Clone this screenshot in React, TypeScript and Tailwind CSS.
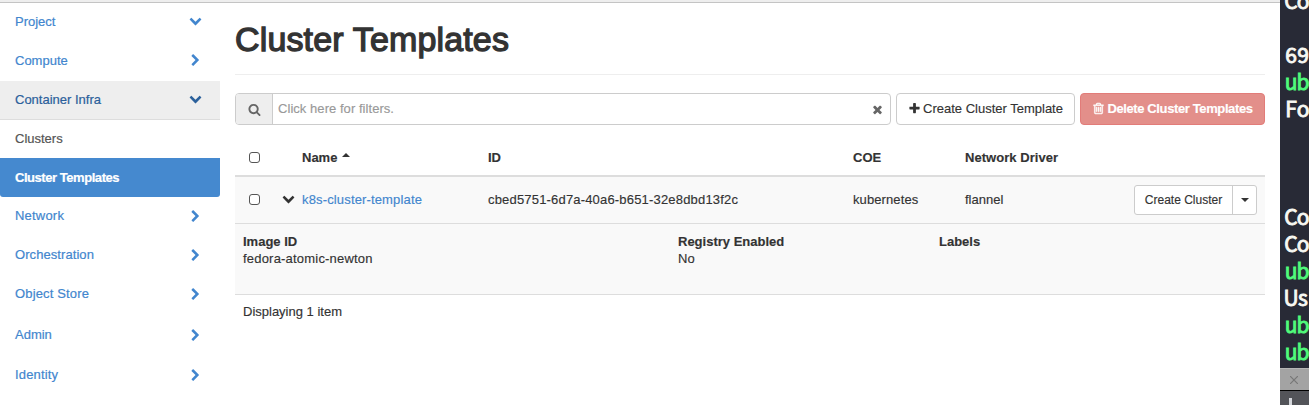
import React from "react";

const ICONS = {
  down: "M1683 808l-742 741q-19 19-45 19t-45-19l-742-741q-19-19-19-45.5t19-45.5l166-165q19-19 45-19t45 19l531 531 531-531q19-19 45-19t45 19l166 165q19 19 19 45.5t-19 45.5z",
  right: "M1363 877l-742 742q-19 19-45 19t-45-19l-166-166q-19-19-19-45t19-45l531-531-531-531q-19-19-19-45t19-45l166-166q19-19 45-19t45 19l742 742q19 19 19 45t-19 45z",
  search: "M1216 832q0-185-131.5-316.5t-316.5-131.5-316.5 131.5-131.5 316.5 131.5 316.5 316.5 131.5 316.5-131.5 131.5-316.5zm512 832q0 52-38 90t-90 38q-54 0-90-38l-343-342q-179 124-399 124-143 0-273.5-55.5t-225-150-150-225-55.5-273.5 55.5-273.5 150-225 225-150 273.5-55.5 273.5 55.5 225 150 150 225 55.5 273.5q0 220-124 399l343 343q37 37 37 90z",
  times: "M1490 1322q0 40-28 68l-136 136q-28 28-68 28t-68-28l-294-294-294 294q-28 28-68 28t-68-28l-136-136q-28-28-28-68t28-68l294-294-294-294q-28-28-28-68t28-68l136-136q28-28 68-28t68 28l294 294 294-294q28-28 68-28t68 28l136 136q28 28 28 68t-28 68l-294 294 294 294q28 28 28 68z",
  plus: "M1600 736v192q0 40-28 68t-68 28h-416v416q0 40-28 68t-68 28h-192q-40 0-68-28t-28-68v-416h-416q-40 0-68-28t-28-68v-192q0-40 28-68t68-28h416v-416q0-40 28-68t68-28h192q40 0 68 28t28 68v416h416q40 0 68 28t28 68z",
  trash: "M704 736v576q0 14-9 23t-23 9h-64q-14 0-23-9t-9-23v-576q0-14 9-23t23-9h64q14 0 23 9t9 23zm256 0v576q0 14-9 23t-23 9h-64q-14 0-23-9t-9-23v-576q0-14 9-23t23-9h64q14 0 23 9t9 23zm256 0v576q0 14-9 23t-23 9h-64q-14 0-23-9t-9-23v-576q0-14 9-23t23-9h64q14 0 23 9t9 23zm128 724v-948h-896v948q0 22 7 40.5t14.5 27 10.5 8.5h832q3 0 10.5-8.5t14.5-27 7-40.5zm-672-1076h448l-48-117q-7-9-17-11h-317q-10 2-17 11zm928 32v64q0 14-9 23t-23 9h-96v948q0 83-47 143.5t-113 60.5h-832q-66 0-113-58.5t-47-141.5v-952h-96q-14 0-23-9t-9-23v-64q0-14 9-23t23-9h309l70-167q15-37 54-63t79-26h320q40 0 79 26t54 63l70 167h309q14 0 23 9t9 23z",
};

function Icon({ name, className = "" }: { name: keyof typeof ICONS; className?: string }) {
  return (
    <svg viewBox="0 0 1792 1792" className={`size-[13px] shrink-0 ${className}`} fill="currentColor">
      <path d={ICONS[name]} />
    </svg>
  );
}

function NavItem({ label, open = false, className, iconClass = "mt-px" }: { label: string; open?: boolean; className: string; iconClass?: string }) {
  return (
    <a className={`flex items-center justify-between pr-[18px] pl-[15px] ${className}`}>
      <span>{label}</span>
      <Icon name={open ? "down" : "right"} className={iconClass} />
    </a>
  );
}

function Sidebar() {
  return (
    <nav className="flex w-[220px] shrink-0 flex-col text-[#4286ce] [-webkit-text-stroke:0.2px]">
      <NavItem label="Project" open className="h-[39px] pb-px" iconClass="mb-[3px]" />
      <NavItem label="Compute" className="h-[39px] pb-px" iconClass="mb-px" />
      <NavItem label="Container Infra" open className="h-[39px] border-b border-[#ddd] bg-[#eee] text-[#2b609b]" iconClass="mb-[3px]" />
      <a className="flex h-[38px] items-center pl-[15px] text-[#555]">Clusters</a>
      <a className="flex h-[39px] items-center rounded-b-[3px] bg-[#4589cf] pl-[15px] font-bold tracking-[-0.45px] text-white">Cluster Templates</a>
      <NavItem label="Network" className="h-[38px] tracking-[0.2px]" />
      <NavItem label="Orchestration" className="h-[39px] tracking-[0.07px]" />
      <NavItem label="Object Store" className="h-[39px] tracking-[0.15px]" />
      <NavItem label="Admin" className="h-[42px] pt-px" />
      <NavItem label="Identity" className="h-[39px] tracking-[0.15px]" />
    </nav>
  );
}

function Checkbox() {
  return <span className="ml-[14px] block size-[11px] rounded-[3px] border border-[#555] bg-white" />;
}

function Caret({ up = false }: { up?: boolean }) {
  return (
    <svg viewBox="0 0 8 4" className="h-1 w-2" fill="currentColor">
      <path d={up ? "M0 4L4 0L8 4Z" : "M0 0L4 4L8 0Z"} />
    </svg>
  );
}

const COLUMNS = "grid grid-cols-[67px_186px_365px_112px_1fr] items-center";

function Content() {
  return (
    <main className="ml-[15px] w-[1030px] shrink-0 [-webkit-text-stroke:0.15px]">
      <h1 className="flex h-[72px] items-center border-b border-[#eee] text-[34px] tracking-[0.15px] text-[#333] [-webkit-text-stroke:1.3px_#333]">
        Cluster Templates
      </h1>

      <div className="mt-[18px] flex h-8">
        <div className="flex w-[656px] rounded-[4px] border border-[#ccc]">
          <div className="flex w-[37px] items-center justify-center rounded-l-[3px] border-r border-[#ccc] bg-[#eee] text-[#666]">
            <Icon name="search" />
          </div>
          <div className="flex flex-1 items-center justify-between pr-[6px] pl-[5px] text-[#999]">
            <span className="tracking-[0.05px]">Click here for filters.</span>
            <Icon name="times" className="text-[#666]" />
          </div>
        </div>
        <button className="ml-[5px] flex w-[179px] items-center justify-center rounded-[4px] border border-[#ccc] bg-white text-[#333]">
          <Icon name="plus" className="mr-[2px] mb-px" />
          <span>Create Cluster Template</span>
        </button>
        <button className="ml-[5px] flex w-[185px] items-center justify-center rounded-[4px] border border-[#e27c79] bg-[#e38f8a] font-bold tracking-[-0.38px] text-white">
          <Icon name="trash" className="mr-[2px] mb-px [stroke-width:60] [stroke:currentColor]" />
          <span>Delete Cluster Templates</span>
        </button>
      </div>

      <div className={`${COLUMNS} mt-[14px] h-[38px] border-b-2 border-[#ddd] pt-px font-bold`}>
        <Checkbox />
        <div className="flex items-center gap-[5px]">
          <span>Name</span>
          <span className="mb-[5px] flex"><Caret up /></span>
        </div>
        <span>ID</span>
        <span>COE</span>
        <span className="tracking-[0.05px]">Network Driver</span>
      </div>
      <div className={`${COLUMNS} h-[47px] border-b border-[#ddd] bg-[#f9f9f9]`}>
        <div className="flex items-center pb-px">
          <Checkbox />
          <Icon name="down" className="mb-[2px] ml-[22px]" />
        </div>
        <span className="tracking-[0.15px] text-[#4286ce]">k8s-cluster-template</span>
        <span className="tracking-[0.18px]">cbed5751-6d7a-40a6-b651-32e8dbd13f2c</span>
        <span className="tracking-[0.1px]">kubernetes</span>
        <div className="flex items-center justify-between pr-2">
          <span>flannel</span>
          <div className="flex h-[30px] rounded-[3px] border border-[#ccc] bg-white text-xs">
            <span className="flex w-[98px] items-center justify-center border-r border-[#ccc] pb-px">Create Cluster</span>
            <span className="flex w-[23px] items-center justify-center"><Caret /></span>
          </div>
        </div>
      </div>
      <div className="grid h-[71px] grid-cols-[435px_261px_1fr] border-b border-[#ddd] bg-[#f9f9f9] pt-[9px] pl-2 leading-[17px]">
        <dl><dt className="font-bold">Image ID</dt><dd className="tracking-[0.2px]">fedora-atomic-newton</dd></dl>
        <dl><dt className="font-bold">Registry Enabled</dt><dd>No</dd></dl>
        <dl><dt className="font-bold">Labels</dt></dl>
      </div>
      <div className="pt-2 pl-2">Displaying 1 item</div>
    </main>
  );
}

const LINES = ["Co", "", "69", "ub", "Fo", "", "", "", "Co", "Co", "ub", "Us", "ub", "ub"];

function Terminal() {
  return (
    <aside className="ml-auto flex h-[405px] w-[29px] shrink-0 flex-col overflow-hidden bg-[#282a36] font-['Noto_Sans_CJK_SC',sans-serif] text-[21px] text-[#f8f8f2] [-webkit-text-stroke:0.9px]">
      <div className="-mt-[13px] h-[381px] shrink-0 pl-[5px]">
        {LINES.map((line, i) => (
          <div key={i} className={`flex h-[27px] leading-[27px] ${line === "ub" ? "text-[#50fa7b]" : ""}`}>
            {[...line].map((c, j) => (
              <span key={j} className="flex w-3 shrink-0 justify-center">{c}</span>
            ))}
          </div>
        ))}
      </div>
      <div className="flex h-[22px] shrink-0 items-center justify-center border-t border-[#b5b5b5] bg-[#a3a3a3] pr-0.5">
        <svg viewBox="0 0 8 8" className="size-2" stroke="#777" strokeWidth="1.2">
          <path d="M0 0L8 8M8 0L0 8" />
        </svg>
      </div>
      <div className="h-[15px] shrink-0 overflow-hidden border-t border-black bg-[#535459] pl-[9px]">
        <div className="mt-[7px] h-2 w-[3px] bg-[#d5d7dc]" />
      </div>
    </aside>
  );
}

export default function App() {
  return (
    <div className="flex h-[405px] w-[1309px] overflow-hidden bg-white font-['Liberation_Sans',Arial,sans-serif] text-[13px] leading-[18px] text-[#333]">
      <div className="flex w-[1280px] shrink-0 flex-col">
        <div className="h-[3px] shrink-0 border-b border-[#c4c4c4] bg-[#eee]" />
        <div className="flex">
          <Sidebar />
          <Content />
        </div>
      </div>
      <Terminal />
    </div>
  );
}
